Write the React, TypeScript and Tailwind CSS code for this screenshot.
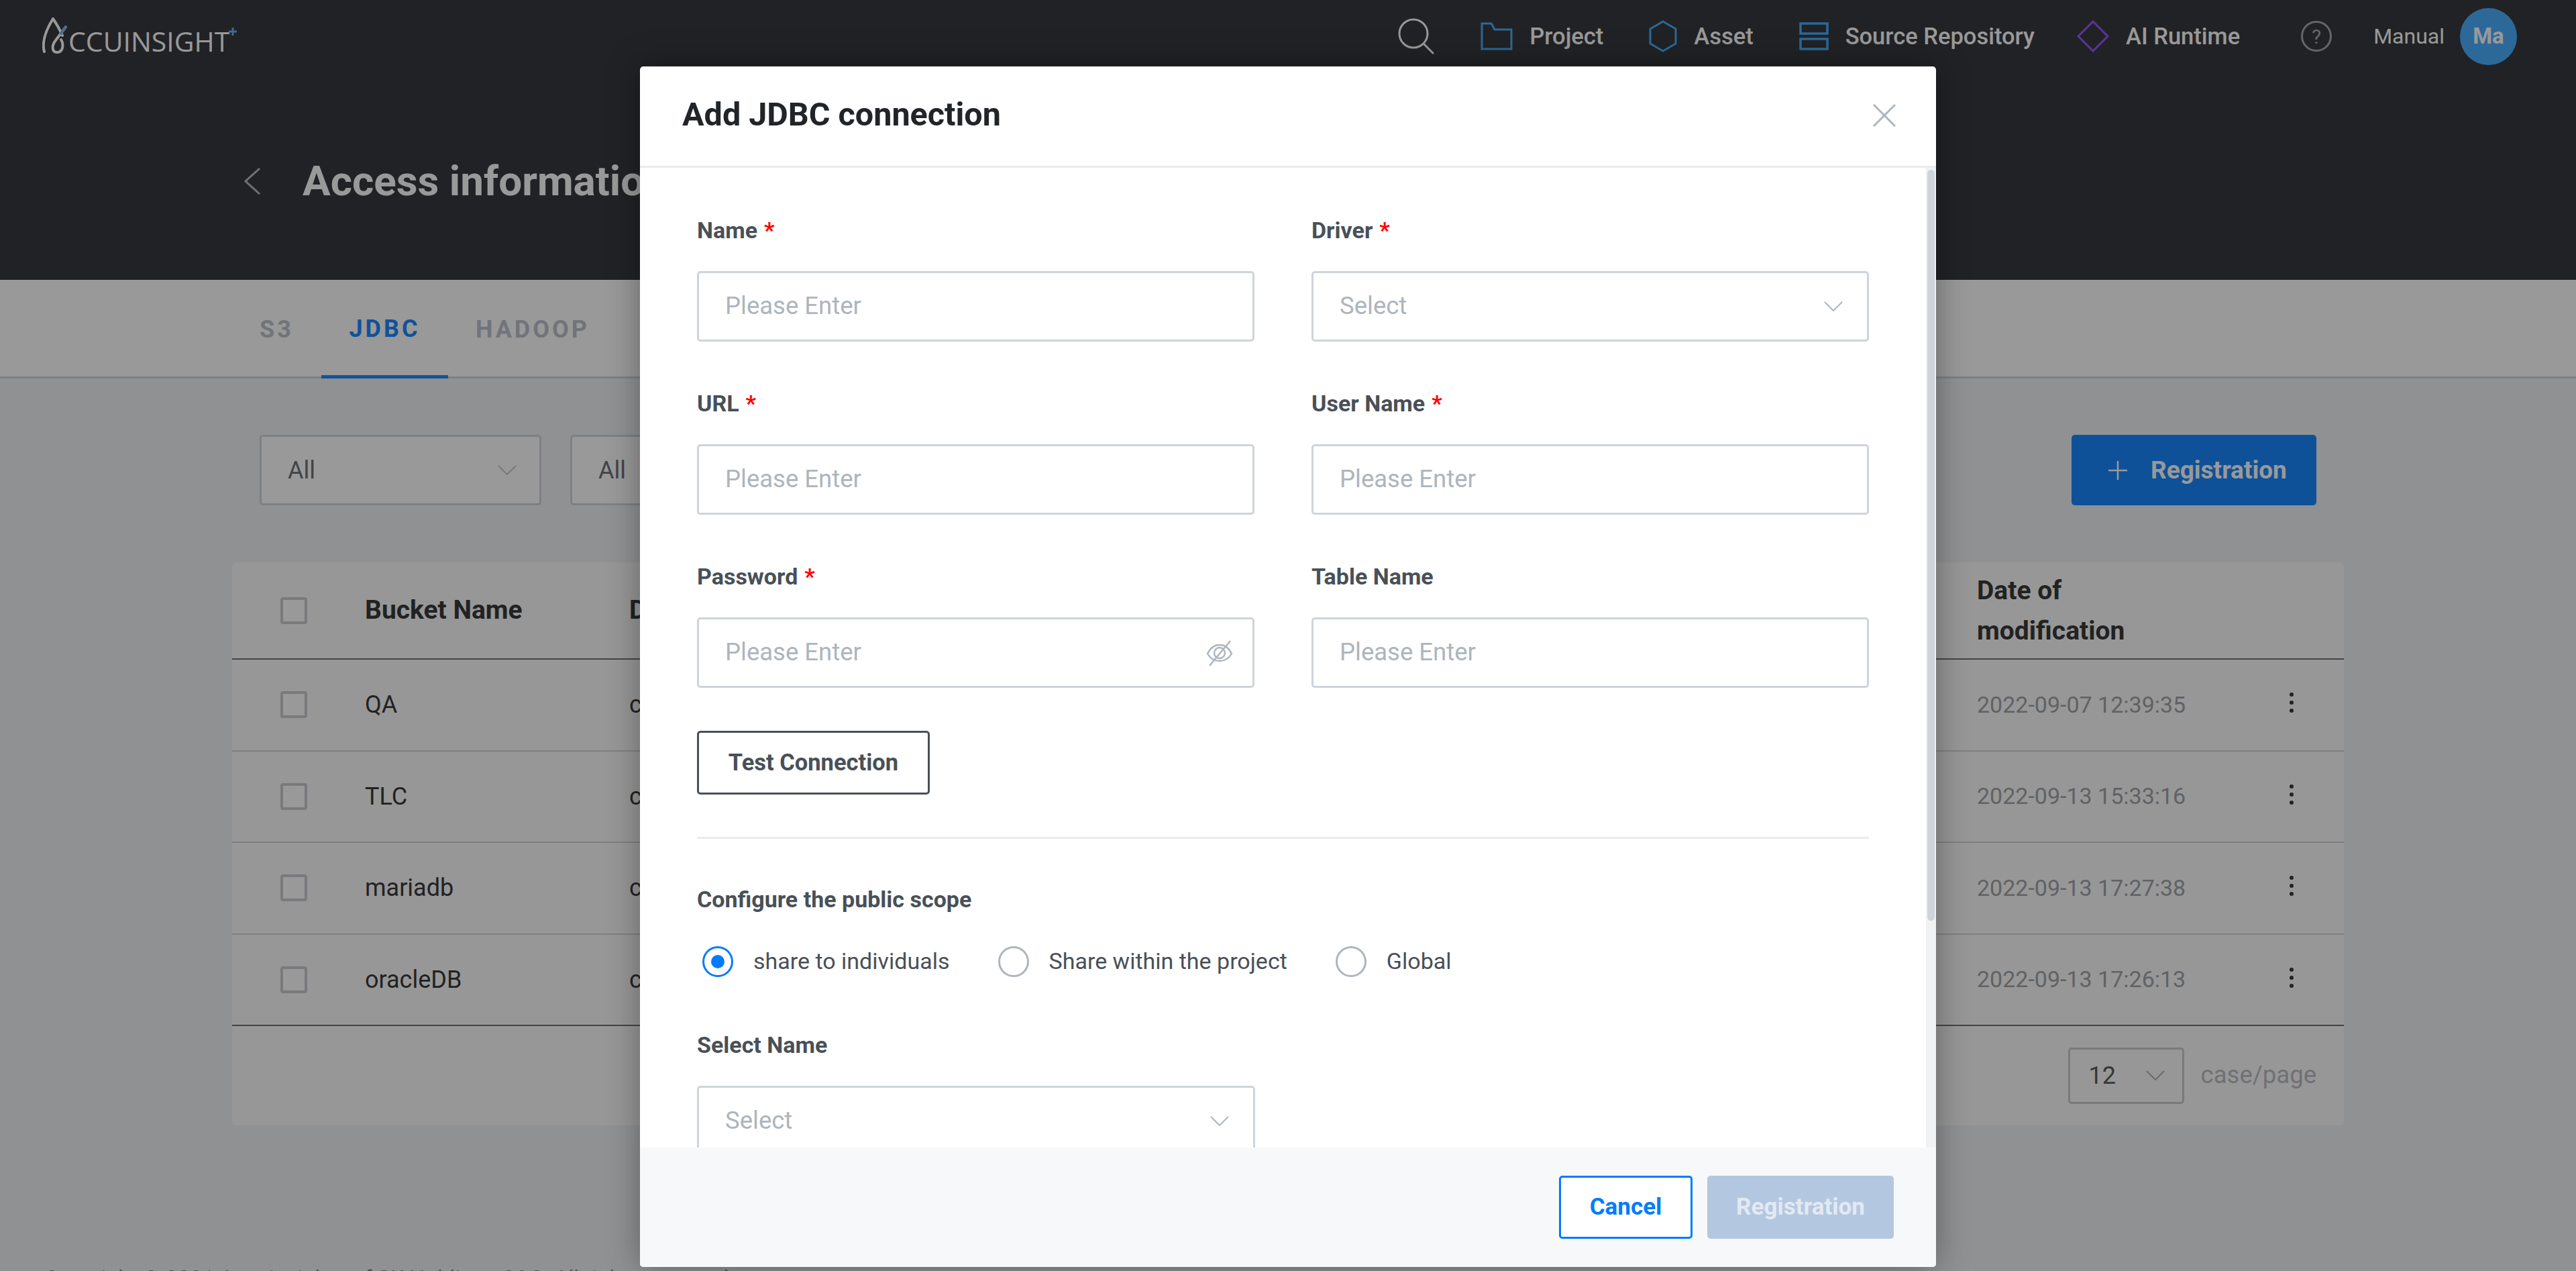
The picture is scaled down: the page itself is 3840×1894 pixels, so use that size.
import React from "react";

const Chevron = ({ className }: { className: string }) => (
  <svg viewBox="0 0 28 15" fill="none" stroke="currentColor" strokeWidth="2" className={className}>
    <path d="M1 1 14 14 27 1" />
  </svg>
);

const Req = () => <span className="ml-[10px] text-[#ff0000]">*</span>;

const Label = ({ text, req }: { text: string; req?: boolean }) => (
  <div className="h-[45px] text-[34px] leading-[45px] font-bold text-[#495057]">
    {text}
    {req && <Req />}
  </div>
);

const Field = ({ label, req, ph, kind }: { label: string; req?: boolean; ph: string; kind?: "select" | "eye" }) => (
  <div className="flex flex-col gap-[38px]">
    <Label text={label} req={req} />
    <div
      className={`flex h-[105px] items-center justify-between rounded-[5px] border-[3px] border-[#ced4da] bg-white pl-[39px] ${
        kind === "eye" ? "pr-[29px]" : "pr-[36px]"
      }`}
    >
      <span className="text-[36.5px] text-[#adb5bd]">{ph}</span>
      {kind === "select" && <Chevron className="h-[15px] w-[28px] text-[#adb5bd]" />}
      {kind === "eye" && (
        <svg viewBox="0 0 40 40" fill="none" stroke="#adb5bd" strokeWidth="2.4" className="h-[40px] w-[40px]">
          <path d="M2 21c4-8 10-13 18-13s14 5 18 13c-4 7-10 11-18 11S6 28 2 21Z" />
          <circle cx="20" cy="20" r="8" />
          <path d="M5 39 36 2" />
        </svg>
      )}
    </div>
  </div>
);

const Radio = ({ label, on }: { label: string; on?: boolean }) => (
  <div className="flex items-center gap-[30px]">
    <span
      className={`flex h-[46px] w-[46px] items-center justify-center rounded-full border-[3px] bg-white ${
        on ? "border-[#007bff]" : "border-[#adb5bd]"
      }`}
    >
      {on && <span className="h-[20px] w-[20px] rounded-full bg-[#007bff]" />}
    </span>
    <span className="text-[34px] text-[#495057]">{label}</span>
  </div>
);

const Check = () => <span className="h-[40px] w-[40px] rounded-[4px] border-[4px] border-[#c8cbd0] bg-white" />;

const rows = [
  ["QA", "2022-09-07 12:39:35"],
  ["TLC", "2022-09-13 15:33:16"],
  ["mariadb", "2022-09-13 17:27:38"],
  ["oracleDB", "2022-09-13 17:26:13"],
];

const NavItem = ({ icon, text }: { icon: React.ReactNode; text: string }) => (
  <div className="flex items-center gap-[25px]">
    {icon}
    <span className="pt-[2px] text-[34.5px] font-medium text-white">{text}</span>
  </div>
);

export default function App() {
  return (
    <div className="relative h-[1894px] w-[3840px] overflow-hidden bg-[#f0f2f5] font-['Roboto',sans-serif]">
      {/* page */}
      <header className="flex h-[417px] flex-col bg-[#37393e]">
        <div className="flex h-[108px] items-center justify-between pr-[88px] pl-[63px]">
          <div className="relative flex h-[56px] w-[290px] items-end">
            <svg viewBox="0 0 50 56" fill="none" className="absolute top-0 left-0 h-[56px] w-[50px]" strokeWidth="4" strokeLinecap="round">
              <path d="M3 51C-1 36 6 18 16 2c5 7 10 16 14 25" stroke="#ffffff" />
              <path d="M35 14 20 34c-7 9-5 18 2 18 8 0 11-10 6-19" stroke="#ffffff" />
              <path d="M35 14 28 24" stroke="#7fb4e6" />
            </svg>
            <span className="ml-[39px] text-[41px] leading-[42px] text-white font-['Open_Sans',sans-serif]">CCUINSIGHT</span>
            <svg viewBox="0 0 12 12" className="absolute top-[15px] right-0 h-[12px] w-[12px]">
              <path d="M6 0v12M0 6h12" stroke="#6db0f5" strokeWidth="3" />
            </svg>
          </div>
          <div className="flex items-center">
            <svg viewBox="0 0 54 54" fill="none" stroke="#ffffff" strokeWidth="3" className="mr-[69px] h-[54px] w-[54px]">
              <circle cx="23" cy="23" r="21" />
              <path d="m38 38 15 15" />
            </svg>
            <div className="flex items-center gap-[68px]">
              <NavItem
                text="Project"
                icon={
                  <svg viewBox="0 0 48 42" fill="none" stroke="#4ab0ff" strokeWidth="3" className="h-[42px] w-[48px]">
                    <path d="M2 2h14l5 9h25v29H2Z" />
                  </svg>
                }
              />
              <NavItem
                text="Asset"
                icon={
                  <svg viewBox="0 0 42 48" fill="none" stroke="#4ab0ff" strokeWidth="3" className="h-[48px] w-[42px]">
                    <path d="m21 2 19 11v22L21 46 2 35V13Z" />
                  </svg>
                }
              />
              <NavItem
                text="Source Repository"
                icon={
                  <svg viewBox="0 0 44 42" fill="none" stroke="#4ab0ff" strokeWidth="3.5" className="h-[42px] w-[44px]">
                    <rect x="2" y="2" width="40" height="15" />
                    <rect x="2" y="25" width="40" height="15" />
                  </svg>
                }
              />
              <div className="-ml-[5px]">
                <NavItem
                  text="AI Runtime"
                  icon={
                    <svg viewBox="0 0 48 48" fill="none" stroke="#9a58ff" strokeWidth="3" className="h-[48px] w-[48px]">
                      <path d="m24 2 22 22-22 22L2 24Z" />
                    </svg>
                  }
                />
              </div>
            </div>
            <span className="ml-[91px] flex h-[46px] w-[46px] items-center justify-center rounded-full border-[3px] border-[#a9abb0] text-[30px] text-[#a9abb0]">?</span>
            <span className="ml-[62px] text-[32px] text-white">Manual</span>
            <span className="ml-[23px] flex h-[85px] w-[85px] items-center justify-center rounded-full bg-[#4ab0ff] text-[33px] font-bold text-white">Ma</span>
          </div>
        </div>
        <div className="mt-[115px] flex items-center pl-[364px]">
          <svg viewBox="0 0 24 40" fill="none" stroke="#b9bcc1" strokeWidth="3" className="h-[40px] w-[24px]">
            <path d="M23 1 2 20l21 19" />
          </svg>
          <h1 className="ml-[63px] text-[62px] font-bold whitespace-nowrap text-white">Access information</h1>
        </div>
      </header>

      <div className="flex h-[147px] border-b-[3px] border-[#d2d5dc] bg-white pl-[346px] text-[36px] font-bold tracking-[4px] text-[#bdc2cb]">
        <div className="flex h-[147px] w-[133px] items-center justify-center">S3</div>
        <div className="flex h-[147px] w-[189px] items-center justify-center border-b-[5px] border-[#1989ff] pt-[3px] text-[#1989ff]">JDBC</div>
        <div className="flex h-[147px] w-[252px] items-center justify-center">HADOOP</div>
      </div>

      <main className="px-[346px] pt-[84px]">
        <div className="flex h-[105px] items-center gap-[43px] pl-[41px]">
          <div className="flex h-[105px] w-[420px] items-center justify-between rounded-[5px] border-[3px] border-[#d3d6da] bg-white pr-[34px] pl-[39px] text-[36px] text-[#6e7278]">
            All
            <Chevron className="h-[15px] w-[28px] text-[#c6c9ce]" />
          </div>
          <div className="flex h-[105px] w-[419px] items-center rounded-[5px] border-[3px] border-[#d3d6da] bg-white pl-[39px] text-[36px] text-[#6e7278]">All</div>
          <div className="mr-[41px] ml-auto flex h-[105px] w-[365px] items-center rounded-[5px] bg-[#1987ff] pl-[55px] text-[37px] font-bold text-white">
            <svg viewBox="0 0 28 28" stroke="currentColor" strokeWidth="2.5" className="h-[28px] w-[28px]">
              <path d="M14 0v28M0 14h28" />
            </svg>
            <span className="ml-[35px]">Registration</span>
          </div>
        </div>

        <section className="mt-[85px] h-[839px] rounded-[6px] bg-[#fcfcfc]">
          <div className="flex h-[145px] items-center border-b-[2px] border-[#6f7278] text-[39px] font-bold text-[#3a3a3a]">
            <div className="flex w-[112px] shrink-0 justify-end"><Check /></div>
            <div className="w-[480px] shrink-0 pl-[86px]">Bucket Name</div>
            <div className="w-[2009px] shrink-0">Description</div>
            <div className="w-[400px] shrink-0 leading-[60px]">Date of<br />modification</div>
          </div>
          {rows.map(([name, date], i) => (
            <div
              key={name}
              className={`flex h-[136.5px] items-center border-b-[2px] text-[36px] text-[#3a3a3a] ${
                i === 3 ? "border-[#6f7278]" : "border-[#d3d6da]"
              }`}
            >
              <div className="flex w-[112px] shrink-0 justify-end"><Check /></div>
              <div className="w-[480px] shrink-0 pl-[86px]">{name}</div>
              <div className="w-[2009px] shrink-0">com.mysql</div>
              <div className="w-[466px] shrink-0 text-[34px] text-[#a0a3a8]">{date}</div>
              <div className="mb-[6px] flex flex-col gap-[6px]">
                <span className="h-[6px] w-[6px] rounded-full bg-[#3a3a3a]" />
                <span className="h-[6px] w-[6px] rounded-full bg-[#3a3a3a]" />
                <span className="h-[6px] w-[6px] rounded-full bg-[#3a3a3a]" />
              </div>
            </div>
          ))}
          <div className="flex h-[147px] items-center justify-end pr-[41px]">
            <div className="flex h-[84px] w-[173px] items-center justify-between rounded-[5px] border-[3px] border-[#c8cbd0] pr-[26px] pl-[28px] text-[36px] text-[#5a5d62]">
              12
              <Chevron className="h-[15px] w-[28px] text-[#b0b3b8]" />
            </div>
            <span className="ml-[25px] text-[36.5px] text-[#b9bcc3]">case/page</span>
          </div>
        </section>

        <div className="mt-[205px] -ml-[280px] text-[32.5px] whitespace-nowrap text-[#7a7d82]">Copyright © 2021 Accuinsight+ of SK Holdings C&C. All rights reserved.</div>
      </main>

      {/* overlay */}
      <div className="absolute inset-0 bg-black/40" />

      {/* modal */}
      <div className="absolute top-[99px] left-[954px] flex h-[1789px] w-[1932px] flex-col overflow-hidden rounded-[5px] bg-white shadow-[0_0_50px_rgba(0,0,0,0.35)]">
        <div className="flex h-[151px] shrink-0 items-center justify-between border-b-[3px] border-[#e9ecef] pr-[60px] pb-[3px] pl-[63px]">
          <h2 className="text-[48.5px] font-bold text-[#212529]">Add JDBC connection</h2>
          <svg viewBox="0 0 34 34" stroke="#adb5bd" strokeWidth="3" className="h-[34px] w-[34px]">
            <path d="m1 1 32 32M33 1 1 33" />
          </svg>
        </div>
        <div className="relative min-h-0 flex-1 overflow-hidden pt-[71px] pr-[100px] pl-[85px]">
          <div className="grid grid-cols-2 gap-x-[85px] gap-y-[70px]">
            <Field label="Name" req ph="Please Enter" />
            <Field label="Driver" req ph="Select" kind="select" />
            <Field label="URL" req ph="Please Enter" />
            <Field label="User Name" req ph="Please Enter" />
            <Field label="Password" req ph="Please Enter" kind="eye" />
            <Field label="Table Name" ph="Please Enter" />
          </div>
          <div className="mt-[64px] flex h-[95px] w-[347px] items-center justify-center rounded-[5px] border-[3px] border-[#495057] text-[34.5px] font-bold text-[#495057]">Test Connection</div>
          <div className="mt-[63px] h-[3px] bg-[#e9ecef]" />
          <div className="mt-[68px]"><Label text="Configure the public scope" /></div>
          <div className="mt-[44px] flex items-center gap-[72px] pl-[8px]">
            <Radio label="share to individuals" on />
            <Radio label="Share within the project" />
            <Radio label="Global" />
          </div>
          <div className="mt-[77px] w-[832px]">
            <Field label="Select Name" ph="Select" kind="select" />
          </div>
          <div className="absolute top-0 right-0 bottom-0 w-[15px] bg-[#f1f2f4]">
            <div className="mx-auto mt-[3px] h-[1119px] w-[11px] rounded-full bg-[#ced4da]" />
          </div>
        </div>
        <div className="flex h-[178px] shrink-0 items-center justify-end gap-[22px] bg-[#f7f8fa] pr-[63px]">
          <div className="flex h-[94px] w-[199px] items-center justify-center rounded-[5px] border-[3px] border-[#007bff] bg-white text-[35px] font-bold text-[#007bff]">Cancel</div>
          <div className="flex h-[94px] w-[278px] items-center justify-center rounded-[5px] bg-[#b3c8e0] text-[35px] font-bold text-[#e3e9f3]">Registration</div>
        </div>
      </div>
    </div>
  );
}
